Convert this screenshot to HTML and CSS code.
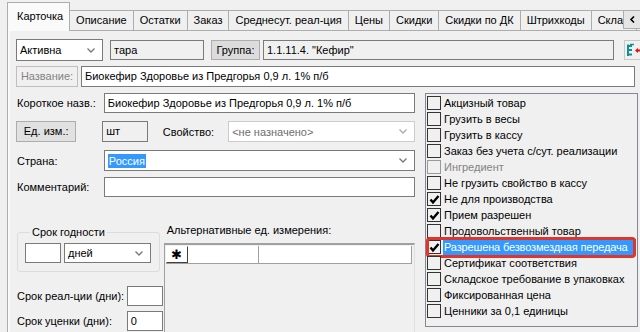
FILE: index.html
```html
<!DOCTYPE html>
<html lang="ru">
<head>
    <meta charset="UTF-8">
    <meta name="viewport" content="width=device-width, initial-scale=1.0">
    <title>Карточка товара</title>
    <link rel="stylesheet" href="styles.css">
</head>
<body>
    <div class="tabs">
        <div class="tab active">Карточка</div>
        <div class="tab">Описание</div>
        <div class="tab">Остатки</div>
        <div class="tab">Заказ</div>
        <div class="tab">Среднесут. реал-ция</div>
        <div class="tab">Цены</div>
        <div class="tab">Скидки</div>
        <div class="tab">Скидки по ДК</div>
        <div class="tab">Штрихкоды</div>
        <div class="tab">Склад</div>
        <div class="tab-scroll">
            <svg width="7" height="7" viewBox="0 0 7 7"><path d="M5 0.5 L2 3.5 L5 6.5" fill="none" stroke="#000" stroke-width="1.6"/></svg>
        </div>
    </div>

    <div class="page">
        <div class="row row-top">
            <div class="select status">
                <span>Активна</span>
                <svg class="chev" width="8" height="5" viewBox="0 0 8 5"><path d="M0.5 0.5 L4 4 L7.5 0.5" fill="none" stroke="#777" stroke-width="1.3"/></svg>
            </div>
            <div class="field tara">тара</div>
            <div class="btn group-btn">Группа:</div>
            <div class="field group">1.1.11.4. "Кефир"</div>
            <div class="icon-btn">
                <svg width="15" height="15" viewBox="0 0 15 15">
                    <path d="M2 1.5 V13 M2 3 H6 M2 7 H6 M2 11.5 H6" fill="none" stroke="#109090" stroke-width="2"/>
                    <path d="M4 1.5 H8" stroke="#109090" stroke-width="1.5"/>
                    <path d="M9 7.5 L12 5 V10 Z M11 6.5 H15 V8.5 H11 Z" fill="#e01010"/>
                </svg>
            </div>
        </div>

        <div class="row row-name">
            <div class="btn disabled name-btn">Название:</div>
            <div class="field name">Биокефир Здоровье из Предгорья 0,9 л. 1% п/б</div>
        </div>

        <div class="main">
            <div class="left">
                <div class="row line short">
                    <span class="label">Короткое назв.:</span>
                    <div class="field wide">Биокефир Здоровье из Предгорья 0,9 л. 1% п/б</div>
                </div>
                <div class="row line units">
                    <div class="btn unit-btn">Ед. изм.:</div>
                    <div class="field unit">шт</div>
                    <span class="label prop-label">Свойство:</span>
                    <div class="select disabled prop">
                        <span>&lt;не назначено&gt;</span>
                        <svg class="chev" width="8" height="5" viewBox="0 0 8 5"><path d="M0.5 0.5 L4 4 L7.5 0.5" fill="none" stroke="#aaa" stroke-width="1.3"/></svg>
                    </div>
                </div>
                <div class="row line country">
                    <span class="label">Страна:</span>
                    <div class="select wide">
                        <span class="picked">Россия</span>
                        <svg class="chev" width="8" height="5" viewBox="0 0 8 5"><path d="M0.5 0.5 L4 4 L7.5 0.5" fill="none" stroke="#777" stroke-width="1.3"/></svg>
                    </div>
                </div>
                <div class="row line comment">
                    <span class="label">Комментарий:</span>
                    <div class="field wide"></div>
                </div>

                <div class="bottom">
                    <div class="terms">
                        <fieldset class="shelf">
                            <legend>Срок годности</legend>
                            <div class="field days-num"></div>
                            <div class="select days">
                                <span>дней</span>
                                <svg class="chev" width="8" height="5" viewBox="0 0 8 5"><path d="M0.5 0.5 L4 4 L7.5 0.5" fill="none" stroke="#777" stroke-width="1.3"/></svg>
                            </div>
                        </fieldset>
                        <div class="term-row first">
                            <span class="label">Срок реал-ции (дни):</span>
                            <div class="field small"></div>
                        </div>
                        <div class="term-row">
                            <span class="label">Срок уценки (дни):</span>
                            <div class="field small">0</div>
                        </div>
                    </div>
                    <div class="alt">
                        <span class="label alt-label">Альтернативные ед. измерения:</span>
                        <div class="grid">
                            <div class="grid-head">
                                <div class="cell star">&#10033;</div>
                                <div class="cell col1"></div>
                                <div class="cell col2"></div>
                            </div>
                        </div>
                    </div>
                </div>
            </div>

            <div class="checklist">
                <div class="check"><span class="box"></span>Акцизный товар</div>
                <div class="check"><span class="box"></span>Грузить в весы</div>
                <div class="check"><span class="box"></span>Грузить в кассу</div>
                <div class="check"><span class="box"></span>Заказ без учета с/сут. реализации</div>
                <div class="check off"><span class="box"></span>Ингредиент</div>
                <div class="check"><span class="box"></span>Не грузить свойство в кассу</div>
                <div class="check"><span class="box on"><svg width="11" height="11" viewBox="0 0 11 11"><path d="M1.5 5.5 L4 8.5 L9.5 2" fill="none" stroke="#000" stroke-width="2.4"/></svg></span>Не для производства</div>
                <div class="check"><span class="box on"><svg width="11" height="11" viewBox="0 0 11 11"><path d="M1.5 5.5 L4 8.5 L9.5 2" fill="none" stroke="#000" stroke-width="2.4"/></svg></span>Прием разрешен</div>
                <div class="check"><span class="box"></span>Продовольственный товар</div>
                <div class="check selected"><span class="box on"><svg width="11" height="11" viewBox="0 0 11 11"><path d="M1.5 5.5 L4 8.5 L9.5 2" fill="none" stroke="#000" stroke-width="2.4"/></svg></span><span class="sel-text">Разрешена безвозмездная передача</span></div>
                <div class="check"><span class="box"></span>Сертификат соответствия</div>
                <div class="check"><span class="box"></span>Складское требование в упаковках</div>
                <div class="check"><span class="box"></span>Фиксированная цена</div>
                <div class="check"><span class="box"></span>Ценники за 0,1 единицы</div>
            </div>
        </div>
    </div>
</body>
</html>
```

FILE: styles.css
```css
body {
    margin: 0;
    width: 640px;
    height: 332px;
    overflow: hidden;
    background-color: #f0f0f0;
    font-family: "Liberation Sans", Arial, sans-serif;
    font-size: 11px;
    font-weight: normal;
    color: #000;
}

/* tab strip */
.tabs {
    position: relative;
    display: flex;
    align-items: flex-end;
    height: 30px;
    padding-left: 7px;
    white-space: nowrap;
}

.tab {
    height: 19px;
    line-height: 19px;
    padding: 0 6px;
    border: 1px solid #adadad;
    border-bottom: none;
    margin-left: -1px;
    background-color: #f0f0f0;
}

.tab.active {
    position: relative;
    z-index: 2;
    height: 28px;
    line-height: 26px;
    margin-left: 0;
    margin-bottom: -1px;
    padding: 0 6px 0 9px;
    background-color: #fafafa;
    border-color: #adadad;
}

.tab.active + .tab {
    margin-left: 0;
    border-left: none;
}

.tab-scroll {
    position: absolute;
    left: 623px;
    top: 10px;
    width: 16px;
    height: 17px;
    border: 1px solid #adadad;
    background-color: #e5e5e5;
    display: flex;
    align-items: center;
    justify-content: center;
}

/* page */
.page {
    width: 660px;
    height: 320px;
    margin-left: 7px;
    border-top: 1px solid #adadad;
    border-left: 1px solid #adadad;
    padding: 8px 0 0 8px;
    box-sizing: border-box;
    box-shadow: inset 2px 0 0 #fafafa;
}

.row {
    display: flex;
    align-items: center;
}

.row-top {
    height: 22px;
}

.row-name {
    height: 21px;
    margin-top: 5px;
}

.field {
    box-sizing: border-box;
    height: 20px;
    line-height: 18px;
    padding: 0 3px;
    border: 1px solid #7a7a7a;
    background-color: #fff;
    white-space: nowrap;
    overflow: hidden;
}

.select {
    box-sizing: border-box;
    height: 21px;
    display: flex;
    align-items: center;
    justify-content: space-between;
    padding: 0 7px 0 3px;
    border: 1px solid #7a7a7a;
    background-color: #fff;
}

.select.disabled {
    border-color: #cccccc;
    color: #6d6d6d;
}

.btn {
    box-sizing: border-box;
    height: 20px;
    line-height: 18px;
    text-align: center;
    border: 1px solid #adadad;
    background-color: #e1e1e1;
}

.btn.disabled {
    background-color: #f0f0f0;
    border-color: #bfbfbf;
    color: #838383;
}

.status {
    width: 87px;
    height: 22px;
}

.tara {
    width: 94px;
    margin-left: 7px;
    background-color: #f0f0f0;
}

.group-btn {
    width: 49px;
    margin-left: 7px;
    background-color: #dcdcdc;
}

.group {
    width: 351px;
    margin-left: 3px;
    background-color: #f0f0f0;
}

.icon-btn {
    margin-left: 10px;
    width: 18px;
    height: 20px;
    border: 1px solid #c8c8c8;
    box-sizing: border-box;
    display: flex;
    align-items: center;
    padding-left: 1px;
}

.name-btn {
    width: 62px;
    height: 21px;
}

.name {
    width: 554px;
    height: 21px;
    margin-left: 3px;
    line-height: 19px;
}

/* lower area */
.main {
    display: flex;
    margin-top: 6px;
}

.left {
    width: 399px;
}

.label {
    white-space: nowrap;
    font-weight: normal;
}

.line .label {
    width: 87px;
    padding-left: 1px;
}

.wide {
    width: 312px;
}

.short {
    height: 20px;
}

.units {
    height: 21px;
    margin-top: 8px;
}

.unit-btn {
    width: 61px;
    height: 21px;
    line-height: 19px;
}

.unit {
    width: 46px;
    height: 21px;
    margin-left: 26px;
    background-color: #f0f0f0;
}

.line .prop-label {
    width: auto;
    margin-left: 14px;
}

.prop {
    width: 189px;
    margin-left: 14px;
}

.country {
    height: 21px;
    margin-top: 8px;
}

.picked {
    background-color: #3399ff;
    color: #fff;
    padding: 0 1px;
    line-height: 14px;
}

.comment {
    height: 20px;
    margin-top: 6px;
}

.bottom {
    display: flex;
    margin-top: 29px;
}

.terms {
    width: 147px;
}

.shelf {
    margin: 0 0 0 1px;
    width: 143px;
    box-sizing: border-box;
    height: 46px;
    padding: 5px 6px 0 7px;
    border: 1px solid #dcdcdc;
    border-radius: 3px;
    display: flex;
    gap: 3px;
}

.shelf legend {
    padding: 0 2px;
    margin-left: 5px;
    font-size: 11px;
    font-weight: normal;
}

.days-num {
    width: 36px;
    height: 20px;
}

.days {
    width: 87px;
    height: 20px;
}

.term-row {
    display: flex;
    align-items: center;
    justify-content: space-between;
    margin-top: 5px;
    padding-left: 1px;
}

.term-row.first {
    margin-top: 14px;
}

.small {
    width: 36px;
    height: 20px;
}

.alt {
    width: 252px;
    margin-left: 1px;
}

.alt-label {
    display: block;
    padding-left: 3px;
    line-height: 13px;
    margin-top: -2px;
}

.grid {
    margin-top: 6px;
    height: 100px;
    border: 1px solid #a0a0a0;
    border-top: 2px solid #a0a0a0;
    border-right-color: #e0e0e0;
    background-color: #f0f0f0;
    padding: 1px 2px 0 1px;
}

.grid-head {
    display: flex;
    height: 17px;
    background-color: #fff;
    border-bottom: 1px solid #a0a0a0;
}

.cell {
    box-sizing: border-box;
    height: 17px;
    border-right: 1px solid #a0a0a0;
}

.star {
    width: 22px;
    text-align: center;
    line-height: 16px;
    font-size: 13px;
    border: 1px solid #fff;
    border-right-color: #404040;
    border-bottom-color: #404040;
    background-color: #fff;
}

.col1 {
    width: 71px;
}

.col2 {
    flex: 1;
}

/* property checklist */
.checklist {
    width: 213px;
    height: 234px;
    margin-left: 10px;
    box-sizing: border-box;
    border: 1px solid #828790;
    padding-top: 1px;
}

.check {
    position: relative;
    display: flex;
    align-items: center;
    height: 16px;
    line-height: 16px;
    white-space: nowrap;
}

.check.off {
    color: #838383;
}

.box {
    box-sizing: border-box;
    width: 14px;
    height: 14px;
    margin: 0 3px 0 1px;
    border: 1px solid #333;
    background-color: #f0f0f0;
    display: flex;
    align-items: center;
    justify-content: center;
    flex-shrink: 0;
}

.check.off .box {
    border-color: #999;
}

.sel-text {
    flex: 1;
    height: 16px;
    background-color: #3399ff;
    color: #fff;
    padding-left: 1px;
    margin-right: 1px;
    letter-spacing: -0.15px;
    overflow: visible;
}

.check.selected .box {
    margin-right: 2px;
}

.check.selected::after {
    content: "";
    position: absolute;
    left: 0;
    right: 1px;
    top: -2px;
    bottom: -3px;
    border: 3px solid #e0342c;
    border-radius: 4px;
}
```
